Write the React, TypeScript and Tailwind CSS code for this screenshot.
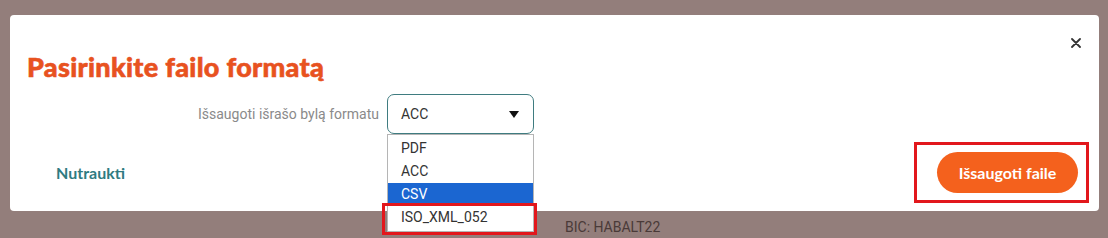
import React from 'react';

const options = ['PDF', 'ACC', 'CSV', 'ISO_XML_052'];

function FormatSelect({ value }: { value: string }) {
  return (
    <div className="relative">
      <div className="flex items-center justify-between w-[147px] h-[40px] pl-[13px] pr-[14px] border-[1.5px] border-[#3f7c80] rounded-[7px] bg-white">
        <span className="text-[14px] text-[#333]" style={{ fontFamily: 'Roboto, sans-serif' }}>
          {value}
        </span>
        <svg width="10" height="7" viewBox="0 0 10 7">
          <path d="M0 0h10L5 7z" fill="#111" />
        </svg>
      </div>
      {/* open option list */}
      <ul
        className="absolute left-0 top-[40px] w-[147px] py-[2px] bg-white border border-[#b5b5b5] z-10"
        style={{ fontFamily: 'Roboto, sans-serif' }}
      >
        {options.map((o) => (
          <li
            key={o}
            className={
              o === 'CSV'
                ? 'h-[23px] pl-[13px] flex items-center text-[14px] bg-[#1b66d1] text-white'
                : 'h-[23px] pl-[13px] flex items-center text-[14px] text-[#333]'
            }
          >
            {o}
          </li>
        ))}
      </ul>
      <div className="absolute left-[-5px] top-[109px] w-[155px] h-[32px] border-[3px] border-[#e2171c] z-20" />
    </div>
  );
}

export default function App() {
  return (
    <div className="w-[1108px] h-[238px] bg-[#937e7b] overflow-hidden pt-[15px] pl-[10px]">
      <div className="relative w-[1089px] h-[196px] bg-white rounded-[4px]">
        <div className="flex justify-end pt-[22px] pr-[17px]">
          <button className="w-[12px] h-[12px] flex items-center justify-center">
            <svg width="10" height="10" viewBox="0 0 10 10">
              <path d="M1 1l8 8M9 1l-8 8" stroke="#333" strokeWidth="1.8" strokeLinecap="round" />
            </svg>
          </button>
        </div>

        <h2
          className="mt-[2px] pl-[17px] text-[27px] leading-[32px] font-black tracking-[0.3px] text-[#e8521f] [-webkit-text-stroke:0.6px_#e8521f]"
          style={{ fontFamily: 'Lato, sans-serif' }}
        >
          Pasirinkite failo formatą
        </h2>

        <div className="mt-[11px] flex items-center gap-[8px] pl-[188px]">
          <span className="text-[14px] text-[#8a8a8a]" style={{ fontFamily: 'Roboto, sans-serif' }}>
            Išsaugoti išrašo bylą formatu
          </span>
          <FormatSelect value="ACC" />
        </div>

        <div className="mt-[18px] flex items-center justify-between pl-[46px] pr-[21px]" style={{ fontFamily: 'Lato, sans-serif' }}>
          <button className="text-[16px] font-bold text-[#2f7b81]">Nutraukti</button>
          <div className="relative">
            <button className="w-[141px] h-[41px] rounded-full bg-[#f4611d] text-white text-[16px] font-bold">
              Išsaugoti faile
            </button>
            <div className="absolute left-[-23px] top-[-10px] w-[175px] h-[61px] border-[3px] border-[#e2171c]" />
          </div>
        </div>
      </div>

      <div className="pl-[555px] pt-[6px] text-[14px] text-[#4a3a38]" style={{ fontFamily: 'Roboto, sans-serif' }}>
        BIC: HABALT22
      </div>
    </div>
  );
}
